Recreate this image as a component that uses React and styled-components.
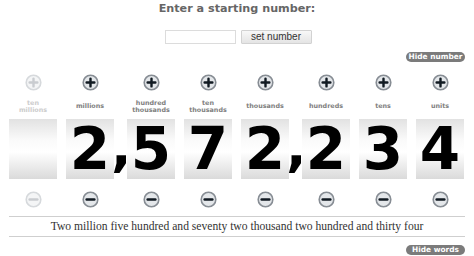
import styled, { createGlobalStyle } from "styled-components";

const GlobalStyle = createGlobalStyle`
    body {
        margin: 0;
        background: #ffffff;
        font-family: "DejaVu Sans", Verdana, sans-serif;
    }
`;

const columns = [
    { label: "ten\nmillions", digit: "", off: true },
    { label: "millions", digit: "2" },
    { label: "hundred\nthousands", digit: "5", comma: true },
    { label: "ten\nthousands", digit: "7" },
    { label: "thousands", digit: "2" },
    { label: "hundreds", digit: "2", comma: true },
    { label: "tens", digit: "3" },
    { label: "units", digit: "4" },
];

function RoundIcon({ minus, off }) {
    const ring = off ? "#d6d9dc" : "#878d94";
    const fill = off ? "#f4f5f6" : "#e4e7ea";
    const mark = off ? "#c9ccd0" : "#111a22";
    return (
        <svg width="17" height="17" viewBox="0 0 17 17">
            <circle cx="8.5" cy="8.5" r="7.3" fill={fill} stroke={ring} strokeWidth="1.6" />
            <path
                d={minus ? "M4.6 8.5H12.4" : "M4.6 8.5H12.4M8.5 4.6V12.4"}
                stroke={mark}
                strokeWidth="2.4"
                strokeLinecap="round"
            />
        </svg>
    );
}

export default function App() {
    return (
        <Page>
            <GlobalStyle />
            <Title>Enter a starting number:</Title>
            <Form>
                <Input type="text" />
                <SetButton>set number</SetButton>
            </Form>
            <ToggleRow>
                <Pill>Hide number</Pill>
            </ToggleRow>
            <Columns>
                {columns.map((c, i) => (
                    <Column key={i} comma={c.comma}>
                        <IconButton><RoundIcon off={c.off} /></IconButton>
                        <Label off={c.off}>{c.label}</Label>
                        <Tile comma={c.comma}>{c.digit}</Tile>
                        <IconButton><RoundIcon minus off={c.off} /></IconButton>
                    </Column>
                ))}
            </Columns>
            <Words>Two million five hundred and seventy two thousand two hundred and thirty four</Words>
            <ToggleRow>
                <Pill>Hide words</Pill>
            </ToggleRow>
        </Page>
    );
}

const Page = styled.div`
    width: 456px;
    margin: 0 auto;
`;

const Title = styled.div`
    text-align: center;
    font-weight: bold;
    font-size: 11.2px;
    color: #666666;
    padding-top: 2px;
    height: 16px;
    line-height: 14px;
`;

const Form = styled.div`
    display: flex;
    justify-content: center;
    gap: 5px;
    margin-top: 12px;
    padding-left: 2px;
`;

const Input = styled.input`
    width: 71px;
    height: 14px;
    box-sizing: border-box;
    border: 1px solid #dcdcdc;
    padding: 0;
`;

const SetButton = styled.button`
    width: 71px;
    height: 14px;
    padding: 0;
    border: 1px solid #d2d2d2;
    border-radius: 1px;
    background: linear-gradient(#f8f8f8, #e4e4e4);
    font-family: "Liberation Sans", Arial, sans-serif;
    font-size: 10px;
    color: #333333;
    line-height: 12px;
`;

const ToggleRow = styled.div`
    display: flex;
    justify-content: flex-end;
    margin-top: 8px;
`;

const Pill = styled.div`
    width: 59px;
    height: 10px;
    box-sizing: border-box;
    border-radius: 5px;
    background: #7b7b7b;
    color: #ffffff;
    font-weight: bold;
    font-size: 7.4px;
    line-height: 10px;
    text-align: center;
`;

const Columns = styled.div`
    display: flex;
    gap: 9px;
    margin-top: 12px;
`;

const Column = styled.div`
    width: 48px;
    display: flex;
    flex-direction: column;
    align-items: center;
    margin-left: ${props => props.comma ? "4px" : "0"};
`;

const IconButton = styled.div`
    width: 17px;
    height: 17px;
    display: flex;
`;

const Label = styled.div`
    height: 15px;
    margin: 8px 0 5px;
    display: flex;
    align-items: center;
    justify-content: center;
    text-align: center;
    white-space: pre-line;
    font-size: 6.4px;
    line-height: 6.6px;
    font-weight: bold;
    color: ${props => props.off ? "#cccccc" : "#808080"};
`;

const Tile = styled.div`
    position: relative;
    width: 48px;
    height: 60px;
    margin-bottom: 12px;
    background: linear-gradient(#e2e2e2, #fafafa 35%, #ffffff 55%, #dadada);
    font-weight: bold;
    font-size: 58px;
    line-height: 60px;
    text-align: center;
    color: #000000;
    &::before {
        content: ${props => props.comma ? '","' : "none"};
        position: absolute;
        left: -16px;
        top: -2px;
        font-size: 54px;
        line-height: 60px;
    }
`;

const Words = styled.div`
    margin-top: 8px;
    border-top: 1px solid #cfcfcf;
    border-bottom: 1px solid #cfcfcf;
    text-align: center;
    font-family: "Liberation Serif", Georgia, serif;
    font-size: 11.6px;
    color: #333333;
    height: 19px;
    line-height: 19px;
`;
